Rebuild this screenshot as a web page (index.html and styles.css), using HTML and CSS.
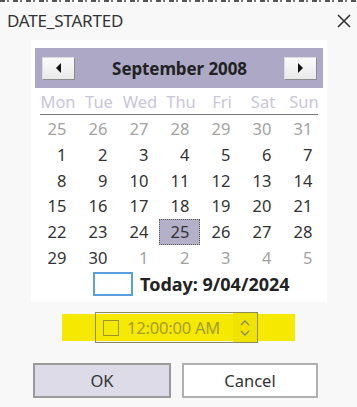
FILE: index.html
```html
<!DOCTYPE html>
<html lang="en">
  <head>
    <meta charset="UTF-8" />
    <meta name="viewport" content="width=device-width, initial-scale=1.0" />
    <title>DATE_STARTED</title>
    <link rel="stylesheet" href="styles.css">
  </head>
  <body>
    <div class="under-strip"></div>

    <div class="title-bar">
      <span class="title">DATE_STARTED</span>
      <svg class="close" width="16" height="16" viewBox="0 0 16 16">
        <path d="M2 2 L14 14 M14 2 L2 14" stroke="#333" stroke-width="1.6" fill="none" />
      </svg>
    </div>

    <div class="calendar">
      <div class="cal-header">
        <button class="nav-btn"><span class="tri-left"></span></button>
        <span class="month">September 2008</span>
        <button class="nav-btn"><span class="tri-right"></span></button>
      </div>

      <div class="day-names">
        <span>Mon</span><span>Tue</span><span>Wed</span><span>Thu</span><span>Fri</span><span>Sat</span><span>Sun</span>
      </div>

      <div class="days">
        <span class="other">25</span><span class="other">26</span><span class="other">27</span><span class="other">28</span><span class="other">29</span><span class="other">30</span><span class="other">31</span>
        <span>1</span><span>2</span><span>3</span><span>4</span><span>5</span><span>6</span><span>7</span>
        <span>8</span><span>9</span><span>10</span><span>11</span><span>12</span><span>13</span><span>14</span>
        <span>15</span><span>16</span><span>17</span><span>18</span><span>19</span><span>20</span><span>21</span>
        <span>22</span><span>23</span><span>24</span><span class="selected">25</span><span>26</span><span>27</span><span>28</span>
        <span>29</span><span>30</span><span class="other">1</span><span class="other">2</span><span class="other">3</span><span class="other">4</span><span class="other">5</span>
      </div>

      <div class="today-row">
        <span class="today-box"></span>
        <span class="today-text">Today: 9/04/2024</span>
      </div>
    </div>

    <div class="time-band">
      <div class="time-box">
        <span class="time-check"></span>
        <span class="time-text">12:00:00 AM</span>
        <span class="spinner">
          <svg width="12" height="20" viewBox="0 0 12 20">
            <path d="M2 7 L6 3 L10 7 M2 13 L6 17 L10 13" stroke="#8a8a6a" stroke-width="1.3" fill="none" />
          </svg>
        </span>
      </div>
    </div>

    <div class="buttons">
      <button class="btn btn-ok">OK</button>
      <button class="btn btn-cancel">Cancel</button>
    </div>
  </body>
</html>
```

FILE: styles.css
```css
body {
  margin: 0;
  width: 357px;
  height: 407px;
  overflow: hidden;
  background-color: #f8f8f8;
  font-family: "Noto Sans", "Open Sans", sans-serif;
  color: #333333;
}

/* bottom edge of the window behind the dialog */
.under-strip {
  height: 3px;
  background-color: #ffffff;
  background-image: repeating-linear-gradient(90deg, #555 0, #555 5px, transparent 5px, transparent 7px, #777 7px, #777 9px, transparent 9px, transparent 13px);
  background-size: 100% 2px;
  background-repeat: no-repeat;
}

.title-bar {
  height: 34px;
  display: flex;
  align-items: center;
  justify-content: space-between;
  padding: 0 5px 0 7px;
}

.title {
  font-size: 17px;
  letter-spacing: -0.2px;
  color: #333333;
}

.close {
  margin-top: 1px;
}

.calendar {
  margin: 3px 0 0 31px;
  width: 296px;
  height: 262px;
  background-color: #ffffff;
  padding: 8px 4px 0 4px;
  box-sizing: border-box;
}

.cal-header {
  height: 40px;
  background-color: #aca8c6;
  display: flex;
  align-items: center;
  justify-content: space-between;
  padding: 0 6px 0 7px;
}

.nav-btn {
  width: 33px;
  height: 23px;
  padding: 0;
  margin: 0;
  background: linear-gradient(#fbfbfb, #e9e9e9);
  border: 1px solid #dcdcdc;
  border-right-color: #8c8c8c;
  border-bottom-color: #8c8c8c;
  display: flex;
  align-items: center;
  justify-content: center;
}

.tri-left {
  width: 0;
  height: 0;
  border-top: 5px solid transparent;
  border-bottom: 5px solid transparent;
  border-right: 5px solid #111111;
}

.tri-right {
  width: 0;
  height: 0;
  border-top: 5px solid transparent;
  border-bottom: 5px solid transparent;
  border-left: 5px solid #111111;
}

.month {
  font-size: 17px;
  font-weight: bold;
  color: #222222;
  letter-spacing: -0.1px;
}

.day-names {
  display: grid;
  grid-template-columns: repeat(7, 41px);
  height: 25px;
  align-items: center;
  padding-top: 1px;
  border-bottom: 1px solid #777777;
  margin-left: 5px;
  margin-right: 5px;
}

.day-names span {
  text-align: center;
  font-size: 16.5px;
  color: #c9c6da;
  margin-left: -5px;
  letter-spacing: 0;
}

.days {
  display: grid;
  grid-template-columns: repeat(7, 41px);
  grid-auto-rows: 25.8px;
  margin-top: 1px;
  margin-left: 0.5px;
}

.days span {
  text-align: right;
  padding-right: 10px;
  font-size: 16.5px;
  line-height: 25.8px;
  color: #333333;
  box-sizing: border-box;
}

.days .other {
  color: #a2a2a2;
}

.days .selected {
  background-color: #b4b0ca;
  outline: 1px dotted #555555;
  outline-offset: -1px;
}

.today-row {
  display: flex;
  align-items: center;
  height: 24px;
  margin-top: 1px;
  padding-left: 58px;
}

.today-box {
  width: 36px;
  height: 20px;
  border: 2px solid #5aa0e0;
  margin-right: 7px;
}

.today-text {
  font-size: 18px;
  font-weight: bold;
  color: #222222;
  letter-spacing: 0;
}

.time-band {
  margin: 12px 0 0 62px;
  width: 233px;
  height: 27px;
  background-color: #f6e900;
  position: relative;
}

.time-box {
  position: absolute;
  left: 33px;
  top: -2px;
  width: 163px;
  height: 31px;
  box-sizing: border-box;
  border: 1px solid #8c8a5c;
  display: flex;
  align-items: center;
  padding-left: 7px;
}

.time-check {
  width: 14px;
  height: 14px;
  border: 1px solid #9a9430;
  margin-right: 8px;
}

.time-text {
  font-size: 16.5px;
  color: #a59c2a;
  letter-spacing: -0.2px;
}

.spinner {
  margin-left: auto;
  width: 24px;
  height: 29px;
  background-color: #efe300;
  display: flex;
  align-items: center;
  justify-content: center;
}

.buttons {
  display: flex;
  gap: 11px;
  margin: 22px 0 0 33px;
}

.btn {
  height: 35px;
  font-family: "Noto Sans", "Open Sans", sans-serif;
  font-size: 16.5px;
  color: #333333;
  box-sizing: border-box;
}

.btn-ok {
  width: 138px;
  background-color: #dddbe8;
  border: 2px solid #9a9a9a;
}

.btn-cancel {
  width: 136px;
  background-color: #ffffff;
  border: 2px solid #b0b0b0;
}
```
